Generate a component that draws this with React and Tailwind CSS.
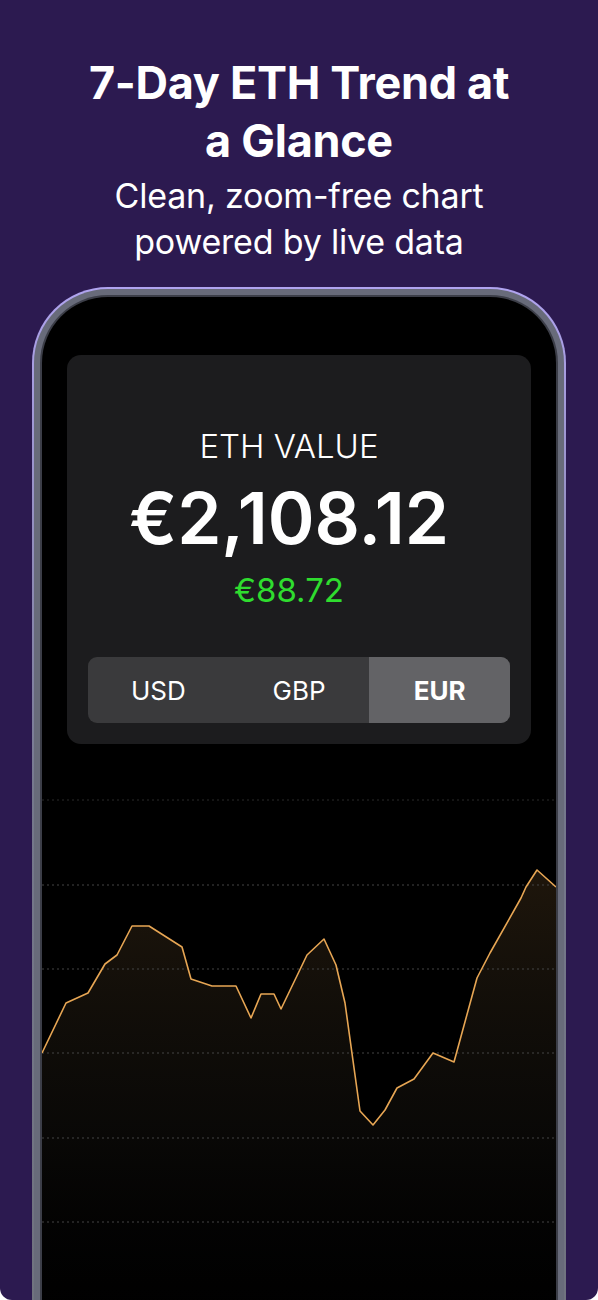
import React from 'react';

const points = [
  [0, 273], [24, 223], [46, 213], [63, 184], [75, 175], [90, 146], [107, 146],
  [140, 167], [149, 199], [170, 206], [194, 206], [209, 238], [219, 214], [232, 214],
  [239, 229], [265, 175], [282, 159], [294, 185], [303, 223], [318, 331], [331, 345],
  [343, 330], [355, 308], [372, 299], [391, 273], [412, 282], [435, 198], [448, 173],
  [479, 118], [484, 107], [495, 90], [514, 107],
];

const gridLines = [105, 189, 273, 358, 442];

function TrendChart() {
  const line = points.map(([x, y]) => `${x},${y}`).join(' ');
  const area = `0,520 ${line} 514,520`;

  return (
    <svg width="514" height="520" viewBox="0 0 514 520" className="block">
      <defs>
        <linearGradient id="fillGrad" x1="0" y1="0" x2="0" y2="1" gradientUnits="objectBoundingBox">
          <stop offset="0%" stopColor="#e9a957" stopOpacity="0.13" />
          <stop offset="60%" stopColor="#8a7a60" stopOpacity="0.07" />
          <stop offset="100%" stopColor="#222" stopOpacity="0.02" />
        </linearGradient>
      </defs>
      <polygon points={area} fill="url(#fillGrad)" />
      <line x1="0" y1="20" x2="514" y2="20" stroke="#2a2a2a" strokeWidth="1" strokeDasharray="2 3" />
      {gridLines.map((y) => (
        <line key={y} x1="0" y1={y} x2="514" y2={y} stroke="#444" strokeWidth="1" strokeDasharray="2 3" />
      ))}
      <polyline points={line} fill="none" stroke="#e7a654" strokeWidth="1.6" strokeLinejoin="round" />
    </svg>
  );
}

export default function App() {
  return (
    <div
      className="w-[598px] h-[1300px] overflow-hidden rounded-b-[12px] bg-[#2c1a50] flex flex-col items-center text-white"
      style={{ fontFamily: 'Inter, "Noto Sans", sans-serif' }}
    >
      <h1 className="mt-[54px] text-[45px] leading-[58px] font-bold text-center tracking-[-0.3px]">
        7-Day ETH Trend at
        <br />
        a Glance
      </h1>
      <p className="mt-[3px] text-[34px] leading-[46px] text-center tracking-[-0.2px]">
        Clean, zoom-free chart
        <br />
        powered by live data
      </p>

      {/* phone frame */}
      <div className="mt-[22px] self-start ml-[32px] w-[534px] rounded-t-[76px] p-[2px] pb-0 bg-gradient-to-b from-[#b0a4f0] via-[#75788c] to-[#70737f]">
        <div className="rounded-t-[74px] bg-[#686b7a] p-[6px] pb-0">
          <div className="rounded-t-[68px] bg-[#3c3e48] p-[2px] pb-0">
            <div className="rounded-t-[66px] bg-black h-[1010px] pt-[58px] flex flex-col">
              {/* value card */}
              <div className="mx-[25px] rounded-[14px] bg-[#1c1c1e] pt-[71px] px-[21px] pb-[21px]">
                <div className="flex flex-col items-center pr-[20px]">
                  <div className="text-[33px] leading-[40px] font-light">ETH VALUE</div>
                  <div className="mt-[11px] text-[71px] leading-[82px] font-semibold">€2,108.12</div>
                  <div className="mt-[11px] text-[33px] leading-[40px] text-[#2fdc2f]">€88.72</div>
                </div>
                <div className="mt-[47px] h-[66px] rounded-[9px] bg-[#3a3a3c] grid grid-cols-3 overflow-hidden text-[26px]">
                  <div className="flex items-center justify-center">USD</div>
                  <div className="flex items-center justify-center">GBP</div>
                  <div className="flex items-center justify-center bg-[#636366] font-bold">EUR</div>
                </div>
              </div>

              <div className="mt-[36px]">
                <TrendChart />
              </div>
            </div>
          </div>
        </div>
      </div>
    </div>
  );
}
